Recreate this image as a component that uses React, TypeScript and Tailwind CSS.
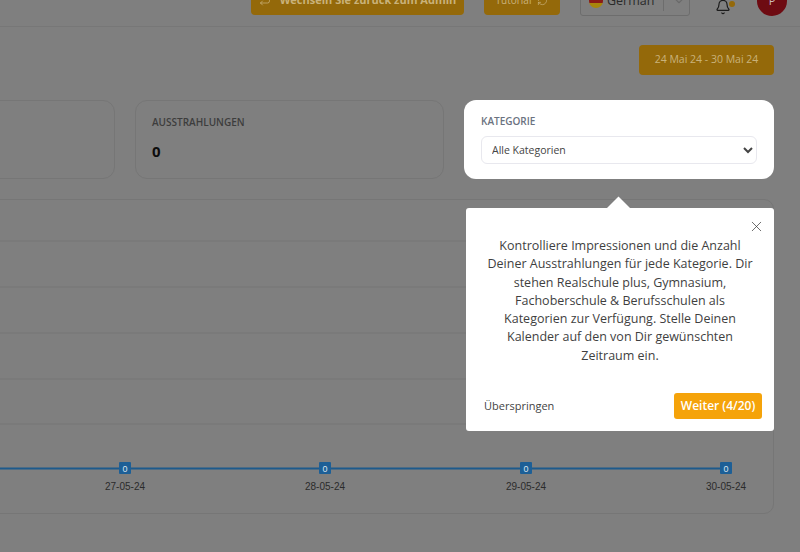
import { Bell, X, ChevronDown, RefreshCw, Repeat } from 'lucide-react';

const gridLines = [41, 87, 133, 179, 224];
const points = [
  { x: 319, label: '27-05-24' },
  { x: 519, label: '28-05-24' },
  { x: 720, label: '29-05-24' },
  { x: 920, label: '30-05-24' },
];

const font = { fontFamily: '"Open Sans", "Noto Sans", sans-serif' };

const App = () => {
  return (
    <div className="relative w-[800px] h-[552px] overflow-hidden bg-[#7f7f7f]" style={font}>
      {/* top bar, scrolled partly out of view */}
      <header className="h-[27px] border-b border-[#777777] overflow-hidden flex items-end justify-end pb-[11px]">
        <button className="shrink-0 w-[213px] h-[30px] flex items-center justify-center gap-[9px] bg-[#94690a] rounded-[4px] text-[11px] font-bold text-[#c9b27a]">
          <Repeat size={12} strokeWidth={1.5} />
          Wechseln Sie zurück zum Admin
        </button>
        <button className="shrink-0 ml-[20px] w-[76px] h-[30px] flex items-center justify-center gap-[6px] bg-[#94690a] rounded-[4px] text-[10px] text-[#c9b27a]">
          Tutorial
          <RefreshCw size={11} strokeWidth={1.5} />
        </button>
        <div className="shrink-0 ml-[20px] w-[110px] h-[30px] mb-[-1px] flex items-center bg-[#7f7f7f] border border-[#6d6d6d] rounded-[3px] pl-[8px] text-[12.5px] text-[#2a2a2a]">
          <span className="w-[14px] h-[14px] rounded-full overflow-hidden flex flex-col mr-[4px]">
            <span className="h-1/3 bg-[#1a1a1a]" />
            <span className="h-1/3 bg-[#8a1c16]" />
            <span className="h-1/3 bg-[#a8860c]" />
          </span>
          German
          <span className="ml-[9px] w-px h-[20px] bg-[#6d6d6d]" />
          <ChevronDown size={14} className="ml-[8px] text-[#6a6a6a]" />
        </div>
        <div className="shrink-0 relative ml-[25px] mr-[13px]">
          <Bell size={16} strokeWidth={1.8} className="text-[#1c1c1c]" />
          <span className="absolute top-[2px] -right-[4px] w-[6px] h-[6px] rounded-full bg-[#94690a]" />
        </div>
        <div className="shrink-0 ml-[13px] mr-[13px] mb-[-1px] w-[30px] h-[30px] rounded-full bg-[#6e0b12] flex items-center justify-center text-[11px] text-[#cbb]">
          P
        </div>
      </header>

      <div className="ml-[-195px] w-[969px]">
        <div className="flex justify-end pt-[18px]">
          <button className="w-[135px] h-[30px] bg-[#94690a] rounded-[4px] text-[10.5px] text-[#c9b27a]">
            24 Mai 24 - 30 Mai 24
          </button>
        </div>

        <div className="mt-[25px] flex gap-[20px]">
          <div className="w-[310px] h-[79px] border border-[#767676] rounded-[12px]" />
          <div className="w-[309px] h-[79px] border border-[#767676] rounded-[12px] px-[16px] pt-[13px]">
            <div className="text-[10px] font-semibold leading-[16px] text-[#3d3d3d]">AUSSTRAHLUNGEN</div>
            <div className="mt-[11px] text-[15px] font-bold leading-[20px] text-[#0d0d0d]">0</div>
          </div>
          <div className="w-[310px] h-[79px] bg-white rounded-[12px] px-[17px] pt-[13px]">
            <div className="text-[10px] font-semibold leading-[16px] text-[#6b7280]">KATEGORIE</div>
            <select className="mt-[7px] w-[276px] h-[28px] bg-white border border-[#e8e8ee] rounded-[6px] pl-[6px] text-[10.5px] text-[#444]">
              <option>Alle Kategorien</option>
            </select>
          </div>
        </div>

        <div className="mt-[20px] h-[315px] border border-[#767676] rounded-[10px]">
          <svg width="967" height="313" className="block">
            {gridLines.map((y) => (
              <line key={y} x1="0" x2="967" y1={y} y2={y} stroke="#767676" />
            ))}
            <line x1="0" x2={920} y1="268.5" y2="268.5" stroke="#1d5a8c" strokeWidth="2" />
            {points.map((p) => (
              <g key={p.x}>
                <rect x={p.x - 6} y="262" width="12" height="12" rx="1" fill="#1d5f96" />
                <text x={p.x} y="271.5" textAnchor="middle" fontSize="9" fill="#dbe6ef" fontFamily="Liberation Sans, sans-serif">0</text>
                <text x={p.x} y="290" textAnchor="middle" fontSize="10" fill="#2b2b2b" fontFamily="Liberation Sans, sans-serif">{p.label}</text>
              </g>
            ))}
          </svg>
        </div>
      </div>

      {/* tour popover */}
      <div className="absolute left-[466px] top-[208px] w-[308px] h-[223px] bg-white rounded-[3px] text-[#3f3f3f]">
        <span className="absolute left-[144px] top-[-8px] w-[17px] h-[17px] bg-white rotate-45" />
        <X size={17} strokeWidth={1} className="absolute right-[9px] top-[10px] text-[#333]" />
        <p className="relative mx-auto mt-[29px] w-[276px] text-center text-[12.5px] leading-[18.3px]">
          Kontrolliere Impressionen und die Anzahl Deiner Ausstrahlungen für jede Kategorie. Dir stehen Realschule plus, Gymnasium, Fachoberschule &amp; Berufsschulen als Kategorien zur Verfügung. Stelle Deinen Kalender auf den von Dir gewünschten Zeitraum ein.
        </p>
        <span className="absolute left-[18px] top-[190px] text-[11px] leading-[16px] text-[#444]">Überspringen</span>
        <button className="absolute right-[12px] top-[185px] w-[88px] h-[26px] bg-[#f5a30a] rounded-[3px] text-[12px] font-semibold text-white">
          Weiter (4/20)
        </button>
      </div>
    </div>
  );
};

export default App;
